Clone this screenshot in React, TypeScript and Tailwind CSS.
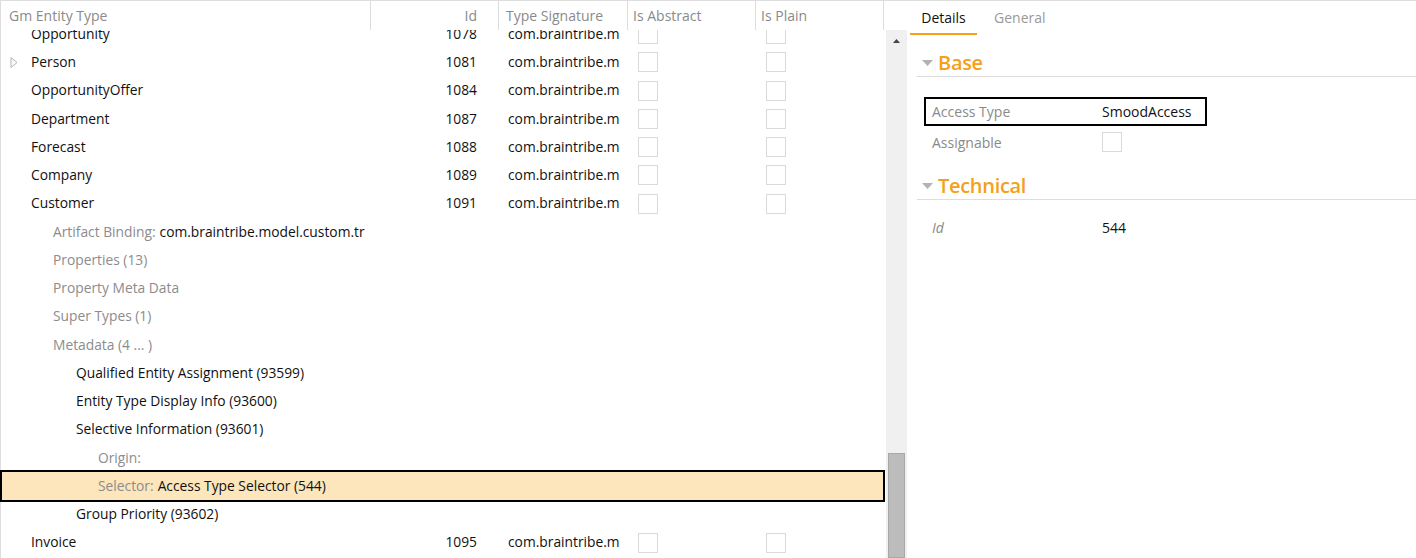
import React from "react";

type Row = {
  level: number;
  name?: string;
  label?: string;
  value?: string;
  id?: string;
  arrow?: boolean;
  selected?: boolean;
};

const rows: Row[] = [
  { level: 0, name: "Opportunity", id: "1078" },
  { level: 0, name: "Person", id: "1081", arrow: true },
  { level: 0, name: "OpportunityOffer", id: "1084" },
  { level: 0, name: "Department", id: "1087" },
  { level: 0, name: "Forecast", id: "1088" },
  { level: 0, name: "Company", id: "1089" },
  { level: 0, name: "Customer", id: "1091" },
  { level: 1, label: "Artifact Binding:", value: "com.braintribe.model.custom.tr" },
  { level: 1, label: "Properties (13)" },
  { level: 1, label: "Property Meta Data" },
  { level: 1, label: "Super Types (1)" },
  { level: 1, label: "Metadata (4 ... )" },
  { level: 2, name: "Qualified Entity Assignment (93599)" },
  { level: 2, name: "Entity Type Display Info (93600)" },
  { level: 2, name: "Selective Information (93601)" },
  { level: 3, label: "Origin:" },
  { level: 3, label: "Selector:", value: "Access Type Selector (544)", selected: true },
  { level: 2, name: "Group Priority (93602)" },
  { level: 0, name: "Invoice", id: "1095" },
];

const indent = ["pl-[30px]", "pl-[52px]", "pl-[75px]", "pl-[97px]"];

function Checkbox() {
  return <div className="w-[20px] h-[20px] border border-[#dadada] bg-white shrink-0" />;
}

function TreeRow({ r }: { r: Row }) {
  const base = r.selected
    ? "h-[32.25px] -my-[2px] border-2 border-black bg-[#fde5bc] w-[885px] -ml-px relative"
    : "h-[28.25px]";
  return (
    <div className={`flex items-center shrink-0 ${base}`}>
      <div
        className={`flex items-center whitespace-nowrap overflow-hidden ${
          r.selected ? "w-[368px]" : "w-[370px]"
        } ${r.arrow ? "pl-[9px]" : r.selected ? "pl-[96px]" : indent[r.level]}`}
      >
        {r.arrow && (
          <svg width="8" height="11" viewBox="0 0 8 11" className="mr-[13px] shrink-0">
            <polygon points="1,0.5 7,5.5 1,10.5" fill="#fafafa" stroke="#b5b5b5" strokeWidth="1" />
          </svg>
        )}
        {r.name && <span className="text-[#111]">{r.name}</span>}
        {r.label && <span className="text-[#8c8c8c]">{r.label}</span>}
        {r.value && <span className="text-[#111] ml-[4px]">{r.value}</span>}
      </div>
      {r.id && (
        <>
          <div className="w-[128px] text-right pr-[22px] text-[#111]">{r.id}</div>
          <div className="w-[129px] pl-[9px] pr-[8px]">
            <div className="w-[112px] overflow-hidden whitespace-nowrap text-[#111]">
              com.braintribe.model.custom
            </div>
          </div>
          <div className="w-[128px] pl-[10px]">
            <Checkbox />
          </div>
          <div className="w-[128px] pl-[10px]">
            <Checkbox />
          </div>
        </>
      )}
    </div>
  );
}

function SectionHeading({ title }: { title: string }) {
  return (
    <div className="flex items-center pl-[5px] h-[28px] border-b border-[#dddddd]">
      <svg width="11" height="6" viewBox="0 0 11 6" className="mr-[5px] shrink-0">
        <polygon points="0,0 11,0 5.5,6" fill="#b3b3b3" />
      </svg>
      <span className="text-[20px] font-semibold text-[#f5a01a] leading-[28px] tracking-[-0.3px]">{title}</span>
    </div>
  );
}

export default function App() {
  return (
    <div
      className="flex w-[1416px] h-[558px] overflow-hidden bg-white border-t border-[#dddddd] text-[14px]"
      style={{ fontFamily: '"Open Sans", "Noto Sans", sans-serif' }}
    >
      {/* Left grid panel */}
      <div className="flex flex-col w-[908px] shrink-0 border-l border-[#dddddd]">
        {/* header */}
        <div className="flex h-[29px] shrink-0 text-[#8a8a8a]">
          <div className="w-[370px] border-r border-[#dddddd] pl-[8px] flex items-center">Gm Entity Type</div>
          <div className="w-[128px] border-r border-[#dddddd] pr-[21px] flex items-center justify-end">Id</div>
          <div className="w-[129px] border-r border-[#dddddd] pl-[7px] flex items-center">Type Signature</div>
          <div className="w-[128px] border-r border-[#dddddd] pl-[5px] flex items-center">Is Abstract</div>
          <div className="w-[128px] border-r border-[#dddddd] pl-[5px] flex items-center">Is Plain</div>
          <div className="flex-1" />
        </div>
        {/* body */}
        <div className="flex flex-1 min-h-0">
          <div className="w-[886px] overflow-hidden text-[13.8px] pl-px -ml-px">
            <div className="flex flex-col -mt-[10px]">
              {rows.map((r, i) => (
                <TreeRow key={i} r={r} />
              ))}
            </div>
          </div>
          <div className="w-[21px] bg-[#f0f0f0] flex flex-col items-center">
            <svg width="7" height="4" viewBox="0 0 7 4" className="mt-[9px]">
              <polygon points="0,4 7,4 3.5,0" fill="#444444" />
            </svg>
            <div className="mt-auto w-[17px] h-[105px] bg-[#bcbcbc] border border-[#a8a8a8]" />
          </div>
        </div>
      </div>

      {/* Right detail panel */}
      <div className="flex-1 flex flex-col">
        <div className="flex h-[34px] shrink-0 pl-[2px]">
          <div className="w-[67px] flex items-center justify-center text-[#111] border-b-2 border-[#f5a01a]">
            Details
          </div>
          <div className="px-[17px] flex items-center text-[#999999] pb-[2px]">General</div>
        </div>
        <div className="pl-[9px] flex flex-col">
          <div className="pt-[14px]">
            <SectionHeading title="Base" />
          </div>
          <div className="mt-[20px] ml-[7px] w-[283px] h-[29px] border-2 border-black flex items-center">
            <div className="w-[176px] pl-[6px] text-[#8a8a8a]">Access Type</div>
            <div className="text-[#111]">SmoodAccess</div>
          </div>
          <div className="mt-[1px] ml-[7px] w-[283px] h-[30px] border-2 border-transparent flex items-center">
            <div className="w-[176px] pl-[6px] text-[#8a8a8a]">Assignable</div>
            <Checkbox />
          </div>
          <div className="pt-[15px]">
            <SectionHeading title="Technical" />
          </div>
          <div className="mt-[12px] ml-[7px] w-[283px] h-[30px] border-2 border-transparent flex items-center">
            <div className="w-[176px] pl-[6px] text-[#8a8a8a] italic">Id</div>
            <div className="text-[#111]">544</div>
          </div>
        </div>
      </div>
    </div>
  );
}
